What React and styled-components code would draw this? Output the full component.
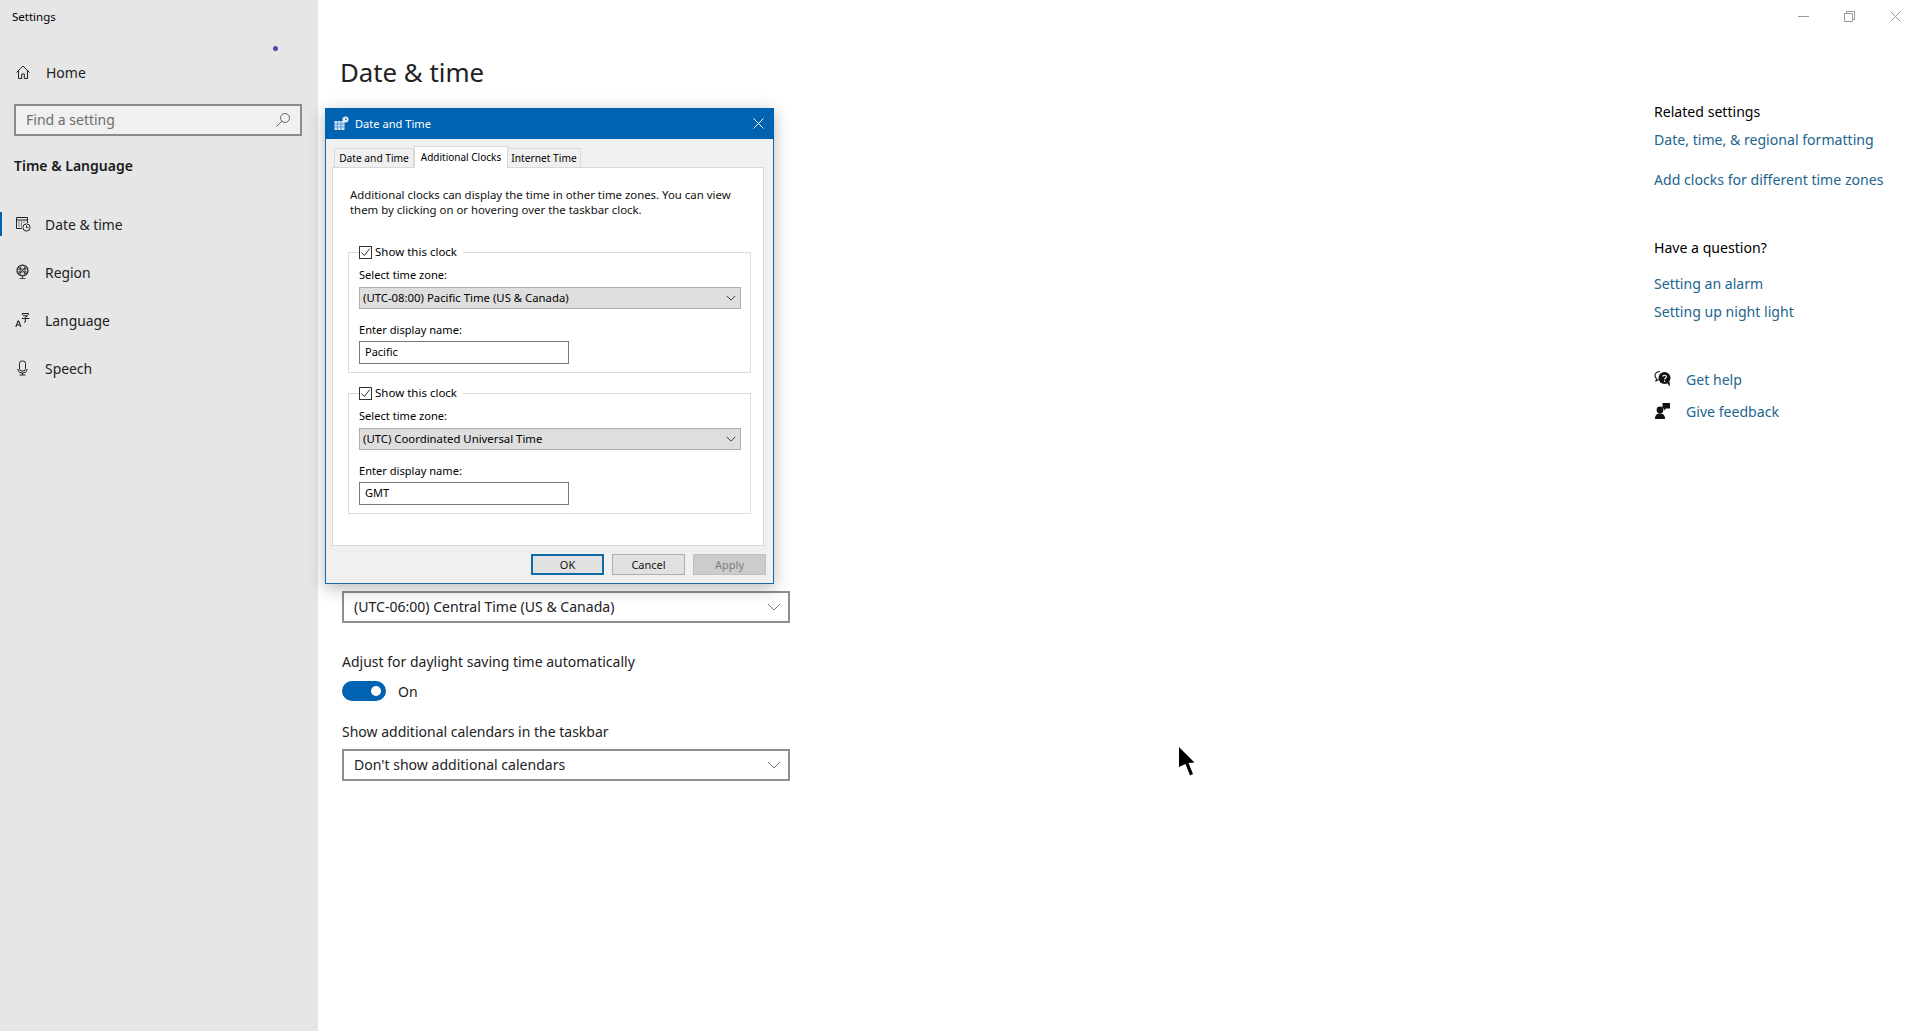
import React from "react";
import styled, { createGlobalStyle } from "styled-components";

const Global = createGlobalStyle`
  html, body { margin: 0; padding: 0; background: #fff; }
  body { font-family: "Noto Sans", "Open Sans", sans-serif; color: #000; overflow: hidden; }
  * { box-sizing: border-box; }
`;

const Page = styled.div`
  position: relative;
  display: flex;
  width: 1918px;
  height: 1031px;
  overflow: hidden;
`;

/* sidebar */
const Sidebar = styled.nav`
  width: 318px;
  flex: none;
  background: #e6e6e6;
  padding-top: 9px;
`;
const AppName = styled.div`
  font-size: 11.5px;
  line-height: 16px;
  padding-left: 12px;
`;
const HomeRow = styled.div`
  display: flex;
  align-items: center;
  height: 48px;
  margin-top: 23px;
  padding-left: 15px;
  font-size: 14px;
  color: #222;
  svg { margin-right: 15px; }
`;
const SearchBox = styled.div`
  display: flex;
  align-items: center;
  justify-content: space-between;
  width: 288px;
  height: 32px;
  margin: 8px 0 0 14px;
  padding: 0 9px 1px 10px;
  border: 2px solid #8b8b8b;
  background: #f0f0f0;
  font-size: 14px;
  color: #6d6d6d;
`;
const SectionTitle = styled.div`
  margin: 19px 0 0 14px;
  font-size: 14px;
  line-height: 22px;
  font-weight: 600;
  color: #1a1a1a;
`;
const NavList = styled.div`
  margin-top: 23px;
`;
const NavItem = styled.div`
  display: flex;
  align-items: center;
  height: 48px;
  padding-left: 15px;
  font-size: 13.9px;
  color: #222;
  position: relative;
  svg { margin-right: 14px; }
  &::before {
    content: "";
    display: ${(p) => (p.$active ? "block" : "none")};
    position: absolute;
    left: 0;
    top: 12px;
    width: 2px;
    height: 24px;
    background: #0063b1;
  }
`;
const LoadingDot = styled.div`
  position: absolute;
  left: 273px;
  top: 46px;
  width: 5px;
  height: 5px;
  border-radius: 50%;
  background: #4848b8;
`;

/* main */
const Main = styled.main`
  flex: 1;
  display: flex;
  flex-direction: column;
`;
const WindowBar = styled.div`
  display: flex;
  justify-content: flex-end;
  align-items: center;
  height: 32px;
`;
const WinButton = styled.div`
  width: 46px;
  display: flex;
  justify-content: center;
`;
const Columns = styled.div`
  flex: 1;
  display: flex;
  justify-content: space-between;
`;
const Content = styled.section`
  padding-left: 22px;
  width: 500px;
`;
const PageTitle = styled.h1`
  margin: 0;
  padding-top: 20px;
  font-size: 25.8px;
  line-height: 40px;
  font-weight: 400;
  color: #222;
`;
const Combo = styled.div`
  display: flex;
  align-items: center;
  justify-content: space-between;
  width: 448px;
  height: 32px;
  margin: ${(p) => p.$top}px 0 0 2px;
  padding: 0 7px 2px 10px;
  border: 2px solid #8f8f8f;
  font-size: 14.05px;
  color: #222;
  svg { margin-top: 2px; }
`;
const FieldLabel = styled.div`
  margin: ${(p) => p.$top}px 0 0 2px;
  font-size: 14px;
  line-height: 20px;
  color: #222;
`;
const ToggleRow = styled.div`
  display: flex;
  align-items: center;
  gap: 12px;
  margin: 9px 0 0 2px;
  font-size: 14px;
  color: #222;
`;
const Toggle = styled.div`
  display: flex;
  align-items: center;
  justify-content: flex-end;
  width: 44px;
  height: 20px;
  padding-right: 5px;
  border-radius: 10px;
  background: #0063b1;
  &::after {
    content: "";
    width: 10px;
    height: 10px;
    border-radius: 50%;
    background: #fff;
  }
`;

/* right column */
const Aside = styled.aside`
  width: 264px;
  padding-top: 70px;
  font-size: 14.1px;
`;
const AsideHeading = styled.div`
  line-height: 20px;
  margin-top: ${(p) => p.$top || 0}px;
`;
const AsideLink = styled.div`
  line-height: 20px;
  margin-top: ${(p) => p.$top}px;
  color: #21648d;
`;
const HelpRow = styled.div`
  display: flex;
  align-items: center;
  gap: 14px;
  height: 20px;
  margin-top: ${(p) => p.$top}px;
  color: #21648d;
`;

/* dialog */
const Dialog = styled.div`
  position: absolute;
  left: 325px;
  top: 108px;
  width: 449px;
  height: 476px;
  display: flex;
  flex-direction: column;
  background: #f0f0f0;
  border: 1px solid #1a69a6;
  border-top: 0;
  box-shadow: 0 4px 16px rgba(0, 0, 0, 0.28);
  font-size: 11px;
`;
const DialogTitle = styled.div`
  display: flex;
  align-items: center;
  height: 31px;
  margin: 0 -1px;
  padding: 0 10px 0 9px;
  background: #0063b1;
  color: #fff;
  gap: 6px;
  font-size: 11.1px;
`;
const DialogClose = styled.div`
  margin-left: auto;
  display: flex;
`;
const DialogBody = styled.div`
  flex: 1;
  display: flex;
  flex-direction: column;
  padding: 7px 9px 0 6px;
`;
const Tabs = styled.div`
  display: flex;
  align-items: flex-end;
  height: 22px;
  margin-bottom: -1px;
  padding-left: 2px;
  position: relative;
  z-index: 1;
`;
const Tab = styled.div`
  display: flex;
  align-items: center;
  justify-content: center;
  width: ${(p) => p.$w}px;
  height: ${(p) => (p.$active ? 22 : 20)}px;
  padding-bottom: ${(p) => (p.$active ? 2 : 0)}px;
  background: ${(p) => (p.$active ? "#fff" : "#f0f0f0")};
  border: 1px solid #d9d9d9;
  border-bottom: ${(p) => (p.$active ? "0" : "1px solid #d9d9d9")};
  border-left: ${(p) => (p.$active ? "1px solid #d9d9d9" : "0")};
  &:first-child { border-left: 1px solid #d9d9d9; }
  font-size: ${(p) => (p.$active ? 10 : 10.2)}px;
`;
const Panel = styled.div`
  width: 432px;
  height: 379px;
  padding: 19px 12px 0 15px;
  background: #fff;
  border: 1px solid #d9d9d9;
`;
const Description = styled.p`
  margin: 0 0 0 2px;
  font-size: 11.4px;
  line-height: 15px;
  color: #111;
`;
const Group = styled.div`
  width: 403px;
  height: 121px;
  margin-top: ${(p) => p.$top}px;
  padding: 0 9px 0 10px;
  border: 1px solid #dcdcdc;
`;
const GroupLegend = styled.label`
  display: flex;
  align-items: center;
  gap: 3px;
  width: fit-content;
  height: 14px;
  margin-top: -8px;
  padding-right: 6px;
  background: #fff;
  font-size: 11.5px;
  line-height: 14px;
  position: relative;
`;
const CheckBox = styled.span`
  display: flex;
  width: 13px;
  height: 13px;
  border: 1px solid #333;
`;
const SmallLabel = styled.div`
  margin-top: ${(p) => p.$top}px;
  font-size: 11.1px;
  line-height: 14px;
`;
const ZoneSelect = styled.div`
  display: flex;
  align-items: center;
  justify-content: space-between;
  height: 22px;
  margin-top: 5px;
  padding: 0 4px 0 3px;
  background: #dedede;
  border: 1px solid #adadad;
  font-size: 11.35px;
  line-height: 14px;
`;
const NameInput = styled.div`
  display: flex;
  align-items: center;
  width: 210px;
  height: 23px;
  margin-top: 4px;
  padding: 0 5px 2px;
  border: 1px solid #7a7a7a;
`;
const ButtonRow = styled.div`
  display: flex;
  justify-content: flex-end;
  gap: 8px;
  margin: 8px -2px 0 0;
`;
const DialogButton = styled.div`
  display: flex;
  align-items: center;
  justify-content: center;
  width: 73px;
  height: 21px;
  padding-bottom: 1px;
  background: ${(p) => (p.$disabled ? "#cccccc" : "#e1e1e1")};
  border: ${(p) => (p.$primary ? "2px solid #0f6ca8" : p.$disabled ? "1px solid #bfbfbf" : "1px solid #adadad")};
  color: ${(p) => (p.$disabled ? "#7f7f7f" : "#111")};
`;
const Cursor = styled.svg`
  position: absolute;
  left: 1179px;
  top: 747px;
`;

const Icon = ({ size = 16, children, ...rest }) => (
  <svg width={size} height={size} viewBox="0 0 16 16" fill="none" stroke="#222" strokeWidth="1" {...rest}>
    {children}
  </svg>
);

const HomeIcon = () => (
  <Icon>
    <path d="M1.5 8.5 8 2l6.5 6.5M3.5 7v7.500h3.200v-4.500h2.600v4.500h3.200V7" />
  </Icon>
);
const SearchIcon = () => (
  <Icon stroke="#666">
    <circle cx="10" cy="6" r="4.5" />
    <path d="M6.8 9.3 1.5 14.500" />
  </Icon>
);
const CalendarIcon = () => (
  <Icon>
    <path d="M7 12.500H1.500v-11h11V7M1.500 4h11" />
    <path d="M3.500 6h1M6 6h1M8.500 6h1M3.500 8h1M6 8h1M3.500 10h1M6 10h1" strokeWidth="1.2" />
    <circle cx="11.500" cy="11.500" r="3.600" />
    <path d="M11.500 9.500v2.200h1.800" />
  </Icon>
);
const GlobeIcon = () => (
  <Icon>
    <circle cx="7.500" cy="6.500" r="5.500" strokeWidth="1.2" />
    <ellipse cx="7.500" cy="6.500" rx="2.500" ry="5.500" strokeWidth=".8" />
    <path d="M2 5h11M2 8h11M7.500 12v2.500M4.500 14.500h6" strokeWidth=".8" />
    <path d="M3.200 2.600 11.800 10.400M11.800 2.600 3.200 10.400" strokeWidth=".8" />
  </Icon>
);
const LanguageIcon = () => (
  <Icon>
    <path d="M.8 15 3 9h.7l2.200 6M1.500 13h3.700" strokeWidth="1.1" />
    <path d="M7 1.500h6.500M7.300 1.500V3M13.200 1.500V3M8 3.800h4.500L10.200 5.500M6.800 6.500h7.500M10.300 5.500v4.500l-1.200.4" />
  </Icon>
);
const MicIcon = () => (
  <Icon>
    <rect x="4.500" y="1" width="6" height="10" rx="2.500" />
    <path d="M3 9v1a4 4 0 0 0 4 3h1a4 4 0 0 0 4-3V9M7.500 13v2M4.500 15h6" />
  </Icon>
);
const HelpIcon = () => (
  <svg width="18" height="18" viewBox="0 0 18 18">
    <path d="M6 1.500C3 1.500 1 3.300 1 5.600c0 1.300.6 2.300 1.500 3L2 11l2.800-1.600" fill="none" stroke="#111" strokeWidth="1.100" />
    <circle cx="10.500" cy="8" r="6" fill="#111" />
    <path d="M13 13l3 3.500-.5-5z" fill="#111" />
    <path d="M8.700 6.600c.2-1.800 3.700-1.800 3.700.2 0 1.200-1.800 1.200-1.800 2.600" fill="none" stroke="#fff" strokeWidth="1.200" />
    <circle cx="10.600" cy="11.300" r=".8" fill="#fff" />
  </svg>
);
const FeedbackIcon = () => (
  <svg width="18" height="18" viewBox="0 0 18 18" fill="#111">
    <circle cx="6" cy="8" r="3.400" />
    <path d="M1 17c0-4 2-5.500 5-5.500s5 1.500 5 5.500z" />
    <path d="M8.500 1h7.500v5.500h-4l-2 2v-2H8.500z" />
  </svg>
);
const Chevron = ({ w = 14, color = "#777", sw = 1 }) => (
  <svg width={w} height={w / 2 + 1} viewBox="0 0 14 8" fill="none" stroke={color} strokeWidth={sw}>
    <path d="M1 1l6 6 6-6" />
  </svg>
);
const CheckMark = () => (
  <svg width="11" height="11" viewBox="0 0 11 11" fill="none" stroke="#333" strokeWidth="1">
    <path d="M1.500 5.500 4.300 8.500 9.800 1.500" />
  </svg>
);
const DialogIcon = () => (
  <svg width="15" height="15" viewBox="0 0 15 15">
    <rect x="0.500" y="5" width="10" height="9" fill="#cfe4f5" />
    <path d="M0.500 8h10M0.500 11h10M3.500 5v9M7 5v9" stroke="#5b9bd0" strokeWidth="1" />
    <circle cx="11.500" cy="3.500" r="3" fill="#e8f2fb" />
    <path d="M11.500 1.800v1.900h1.500" fill="none" stroke="#0063b1" strokeWidth=".8" />
  </svg>
);

const ClockGroup = ({ top, zone, name }) => (
  <Group $top={top}>
    <GroupLegend>
      <CheckBox><CheckMark /></CheckBox>
      Show this clock
    </GroupLegend>
    <SmallLabel $top={9}>Select time zone:</SmallLabel>
    <ZoneSelect>
      {zone}
      <Chevron w={10} color="#333" sw={1.3} />
    </ZoneSelect>
    <SmallLabel $top={14}>Enter display name:</SmallLabel>
    <NameInput>{name}</NameInput>
  </Group>
);

export default function App() {
  return (
    <Page>
      <Global />
      <Sidebar>
        <AppName>Settings</AppName>
        <HomeRow><HomeIcon />Home</HomeRow>
        <SearchBox>Find a setting<SearchIcon /></SearchBox>
        <SectionTitle>Time &amp; Language</SectionTitle>
        <NavList>
          <NavItem $active><CalendarIcon />Date &amp; time</NavItem>
          <NavItem><GlobeIcon />Region</NavItem>
          <NavItem><LanguageIcon />Language</NavItem>
          <NavItem><MicIcon />Speech</NavItem>
        </NavList>
      </Sidebar>
      <LoadingDot />
      <Main>
        <WindowBar>
          <WinButton>
            <svg width="11" height="11" viewBox="0 0 11 11" stroke="#999"><path d="M0 5.500h11" /></svg>
          </WinButton>
          <WinButton>
            <svg width="11" height="11" viewBox="0 0 11 11" fill="none" stroke="#999"><path d="M.5 2.500h8v8h-8zM2.500 2.500v-2h8v8h-2" /></svg>
          </WinButton>
          <WinButton>
            <svg width="11" height="11" viewBox="0 0 11 11" stroke="#999"><path d="M.5.500l10 10M10.500.500l-10 10" /></svg>
          </WinButton>
        </WindowBar>
        <Columns>
          <Content>
            <PageTitle>Date &amp; time</PageTitle>
            <Combo $top={499}>
              (UTC-06:00) Central Time (US &amp; Canada)
              <Chevron />
            </Combo>
            <FieldLabel $top={29}>Adjust for daylight saving time automatically</FieldLabel>
            <ToggleRow><Toggle />On</ToggleRow>
            <FieldLabel $top={21}>Show additional calendars in the taskbar</FieldLabel>
            <Combo $top={7}>
              Don't show additional calendars
              <Chevron />
            </Combo>
          </Content>
          <Aside>
            <AsideHeading>Related settings</AsideHeading>
            <AsideLink $top={8}>Date, time, &amp; regional formatting</AsideLink>
            <AsideLink $top={20}>Add clocks for different time zones</AsideLink>
            <AsideHeading $top={48}>Have a question?</AsideHeading>
            <AsideLink $top={16}>Setting an alarm</AsideLink>
            <AsideLink $top={8}>Setting up night light</AsideLink>
            <HelpRow $top={47}><HelpIcon />Get help</HelpRow>
            <HelpRow $top={12}><FeedbackIcon />Give feedback</HelpRow>
          </Aside>
        </Columns>
      </Main>
      <Dialog>
        <DialogTitle>
          <DialogIcon />
          Date and Time
          <DialogClose>
            <svg width="11" height="11" viewBox="0 0 11 11" stroke="#fff"><path d="M.5.500l10 10M10.500.500l-10 10" /></svg>
          </DialogClose>
        </DialogTitle>
        <DialogBody>
          <Tabs>
            <Tab $w={80}>Date and Time</Tab>
            <Tab $w={94} $active>Additional Clocks</Tab>
            <Tab $w={73}>Internet Time</Tab>
          </Tabs>
          <Panel>
            <Description>
              Additional clocks can display the time in other time zones. You can view<br />
              them by clicking on or hovering over the taskbar clock.
            </Description>
            <ClockGroup top={35} zone="(UTC-08:00) Pacific Time (US & Canada)" name="Pacific" />
            <ClockGroup top={20} zone="(UTC) Coordinated Universal Time" name="GMT" />
          </Panel>
          <ButtonRow>
            <DialogButton $primary>OK</DialogButton>
            <DialogButton>Cancel</DialogButton>
            <DialogButton $disabled>Apply</DialogButton>
          </ButtonRow>
        </DialogBody>
      </Dialog>
      <Cursor width="16" height="29" viewBox="0 0 16 29">
        <path d="M0 0 15.500 15.500 9.500 16 14 27 11 28.500 6.500 17 0 20z" fill="#000" />
      </Cursor>
    </Page>
  );
}
